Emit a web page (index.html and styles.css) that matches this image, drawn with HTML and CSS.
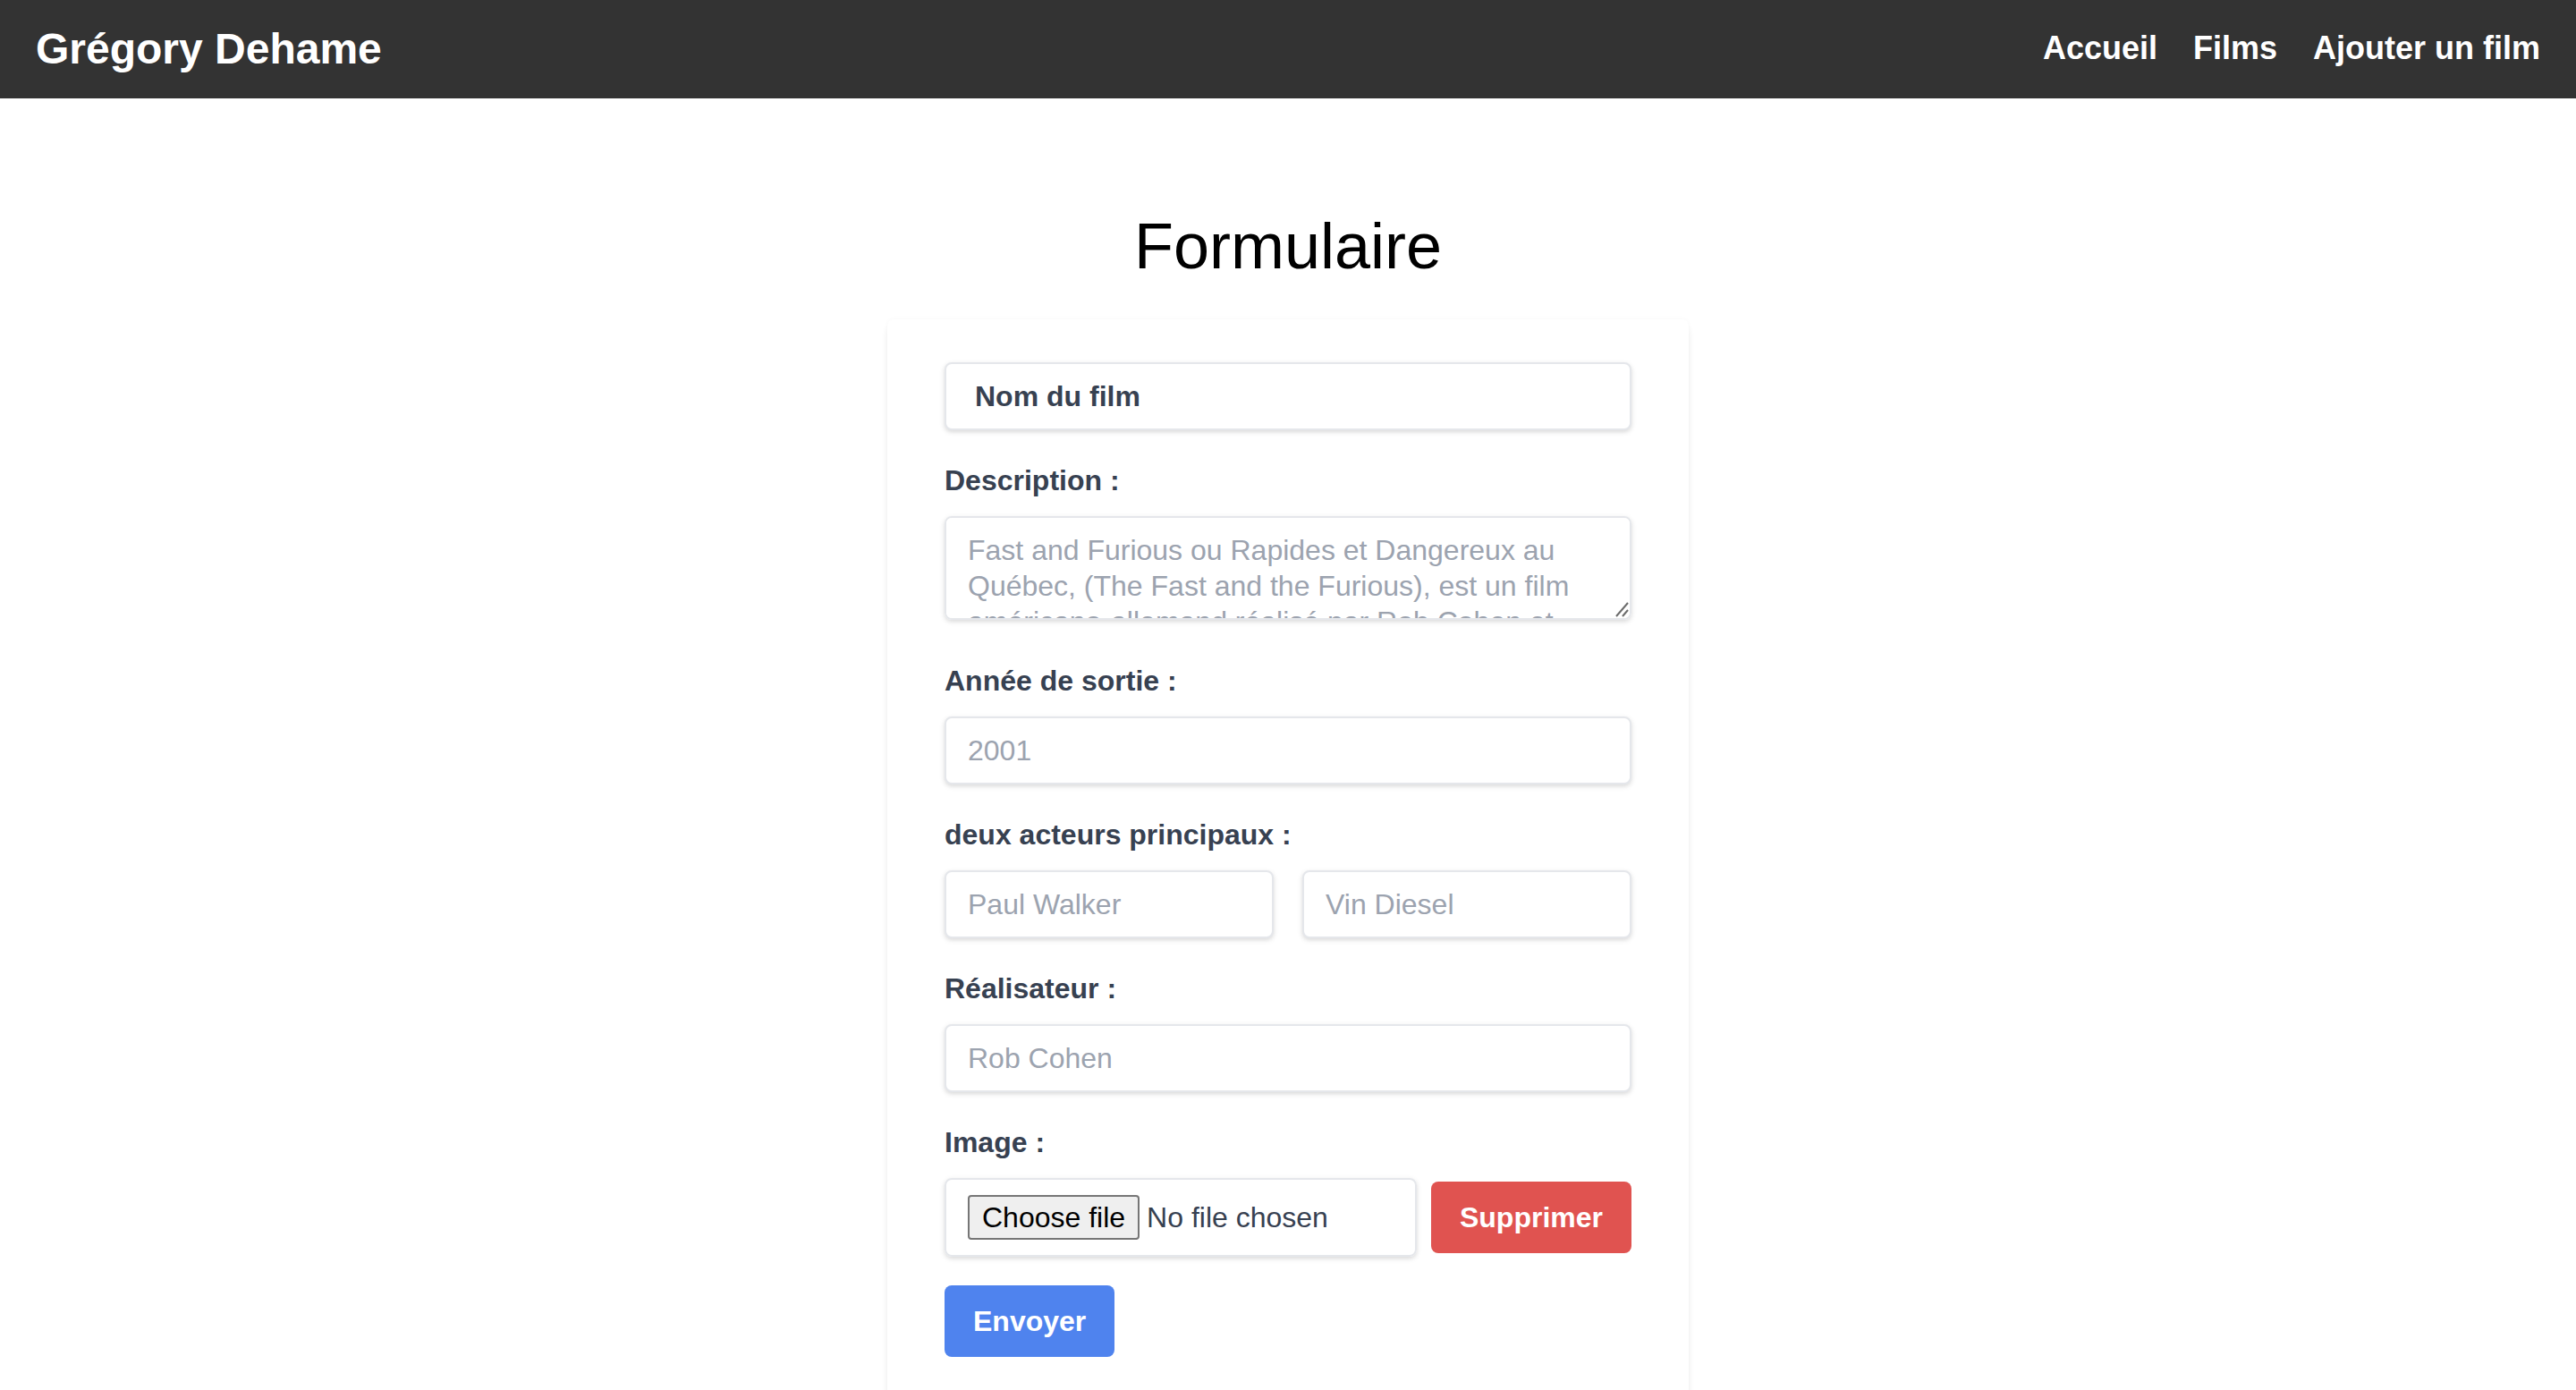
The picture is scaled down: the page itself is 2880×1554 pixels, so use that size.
FILE: index.html
```html
<!DOCTYPE html>
<html lang="fr">
<head>
<meta charset="utf-8">
<title>Formulaire</title>
<link rel="stylesheet" href="styles.css">
</head>
<body>
<header class="nav">
  <a class="brand" href="#">Grégory Dehame</a>
  <nav class="links">
    <a href="#">Accueil</a>
    <a href="#">Films</a>
    <a href="#">Ajouter un film</a>
  </nav>
</header>
<main class="page">
  <h1 class="title">Formulaire</h1>
  <form class="card">
    <div class="group">
      <input class="field name" type="text" value="Nom du film">
    </div>
    <div class="group group-area">
      <label class="label">Description :</label>
      <div class="area-wrap">
        <textarea class="field area" rows="2" placeholder="Fast and Furious ou Rapides et Dangereux au Québec, (The Fast and the Furious), est un film américano-allemand réalisé par Rob Cohen et sorti en 2001."></textarea>
        <svg class="grip" width="20" height="20" viewBox="0 0 20 20" aria-hidden="true">
          <line x1="4" y1="17" x2="17" y2="2" stroke="#6b6b6b" stroke-width="2"/>
          <line x1="11" y1="17" x2="17" y2="10" stroke="#6b6b6b" stroke-width="2"/>
        </svg>
      </div>
    </div>
    <div class="group">
      <label class="label">Année de sortie :</label>
      <input class="field" type="text" placeholder="2001">
    </div>
    <div class="group">
      <label class="label">deux acteurs principaux :</label>
      <div class="pair">
        <input class="field" type="text" placeholder="Paul Walker">
        <input class="field" type="text" placeholder="Vin Diesel">
      </div>
    </div>
    <div class="group">
      <label class="label">Réalisateur :</label>
      <input class="field" type="text" placeholder="Rob Cohen">
    </div>
    <div class="group">
      <label class="label">Image :</label>
      <div class="file-row">
        <div class="file-box">
          <span class="file-btn">Choose file</span>
          <span class="file-name">No file chosen</span>
        </div>
        <button class="btn btn-red" type="button">Supprimer</button>
      </div>
    </div>
    <div class="actions">
      <button class="btn btn-blue" type="button">Envoyer</button>
    </div>
  </form>
</main>
</body>
</html>
```
FILE: styles.css
```css
* { box-sizing: border-box; }
html, body { margin: 0; padding: 0; }
body {
  font-family: "Liberation Sans", Arial, Helvetica, sans-serif;
  background: #ffffff;
  color: #000;
}
.nav {
  height: 110px;
  background: #333333;
  display: flex;
  align-items: center;
  justify-content: space-between;
  padding: 0 40px 2px;
}
.brand {
  color: #fff;
  font-size: 48px;
  font-weight: bold;
  text-decoration: none;
}
.links {
  display: flex;
  gap: 40px;
}
.links a {
  color: #fff;
  font-size: 36px;
  font-weight: bold;
  text-decoration: none;
}
.page {
  display: flex;
  flex-direction: column;
  align-items: center;
}
.title {
  font-size: 72px;
  font-weight: normal;
  line-height: 80px;
  margin: 125px 0 42px;
  text-align: center;
}
.card {
  width: 896px;
  background: #fff;
  border-radius: 8px;
  padding: 48px 64px 64px;
  box-shadow: 0 8px 12px -2px rgba(0,0,0,0.06), 0 4px 8px -2px rgba(0,0,0,0.04), 0 0 6px rgba(0,0,0,0.03);
}
.group { margin-bottom: 32px; }
.group-area { margin-bottom: 44px; }
.label {
  display: block;
  font-size: 32px;
  line-height: 48px;
  font-weight: bold;
  color: #374151;
  margin-bottom: 16px;
}
.field {
  display: block;
  width: 100%;
  font-family: inherit;
  font-size: 32px;
  line-height: 40px;
  color: #374151;
  padding: 16px 24px;
  border: 2px solid #e5e7eb;
  border-radius: 8px;
  background: #fff;
  box-shadow: 0 2px 6px rgba(0,0,0,0.1), 0 2px 4px rgba(0,0,0,0.06);
  outline: none;
  margin: 0;
}
.field::placeholder { color: #9ca3af; opacity: 1; }
.name {
  font-weight: bold;
  padding-left: 32px;
}
.area-wrap { position: relative; }
.area {
  height: 116px;
  resize: none;
}
.grip {
  position: absolute;
  right: 1px;
  bottom: 1px;
  display: block;
}
.pair {
  display: grid;
  grid-template-columns: 1fr 1fr;
  gap: 32px;
}
.file-row {
  display: flex;
  align-items: center;
  gap: 16px;
}
.file-box {
  flex: 1;
  display: flex;
  align-items: center;
  padding: 17px 24px;
  border: 2px solid #e5e7eb;
  border-radius: 8px;
  box-shadow: 0 2px 6px rgba(0,0,0,0.1), 0 2px 4px rgba(0,0,0,0.06);
}
.file-btn {
  font-size: 32px;
  line-height: 46px;
  color: #000;
  background: #efefef;
  border: 2px solid #767676;
  border-radius: 4px;
  padding: 0 14px;
  margin-right: 8px;
}
.file-name {
  font-size: 32px;
  line-height: 46px;
  color: #374151;
}
.btn {
  font-family: inherit;
  font-size: 32px;
  line-height: 48px;
  font-weight: bold;
  color: #fff;
  border: none;
  border-radius: 8px;
  padding: 16px 32px;
  margin: 0;
}
.btn-red { background: #e05350; }
.btn-blue { background: #4f83ee; }
.actions { display: flex; }
```
